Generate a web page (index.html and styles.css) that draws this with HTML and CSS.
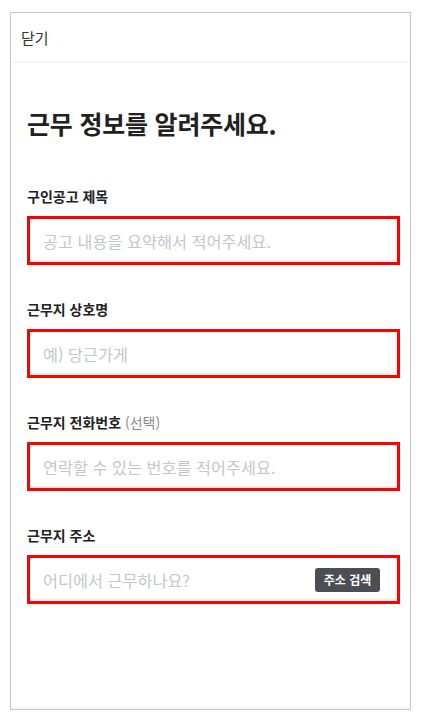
FILE: index.html
```html
<!DOCTYPE html>
<html lang="ko">
<head>
  <meta charset="UTF-8" />
  <meta name="viewport" content="width=device-width, initial-scale=1.0" />
  <title>근무 정보</title>
  <link rel="stylesheet" href="styles.css">
</head>
<body>
  <div class="sheet">
    <header class="sheet-header">
      <button type="button" class="close-btn">닫기</button>
    </header>

    <form class="job-form">
      <h1>근무 정보를 알려주세요.</h1>

      <div class="field">
        <label for="title">구인공고 제목</label>
        <div class="input-box">
          <input type="text" id="title" placeholder="공고 내용을 요약해서 적어주세요.">
        </div>
      </div>

      <div class="field">
        <label for="shop">근무지 상호명</label>
        <div class="input-box">
          <input type="text" id="shop" placeholder="예) 당근가게">
        </div>
      </div>

      <div class="field">
        <label for="phone">근무지 전화번호 <span class="optional">(선택)</span></label>
        <div class="input-box">
          <input type="tel" id="phone" placeholder="연락할 수 있는 번호를 적어주세요.">
        </div>
      </div>

      <div class="field">
        <label for="address">근무지 주소</label>
        <div class="input-box">
          <input type="text" id="address" placeholder="어디에서 근무하나요?">
          <button type="button" class="search-btn">주소 검색</button>
        </div>
      </div>
    </form>
  </div>
</body>
</html>
```

FILE: styles.css
```css
/* Job info sheet */
body {
  font-family: "Noto Sans CJK KR", "Noto Sans", sans-serif;
  background: #fff;
  color: #222;
  margin: 0;
  padding: 12px 20px 15px 10px;
}
.sheet {
  height: 696px;
  border: 1px solid #c6c6c6;
  box-shadow: inset 0 -4px 4px -3px rgba(0, 0, 0, 0.06);
  background: #fff;
  display: flex;
  flex-direction: column;
}
.sheet-header {
  height: 49px;
  border-bottom: 1px solid #eeeeee;
  display: flex;
  align-items: center;
  padding-left: 10px;
}
.close-btn {
  background: none;
  border: none;
  padding: 0;
  font-family: inherit;
  font-size: 15px;
  color: #333;
  cursor: pointer;
}
.job-form {
  display: flex;
  flex-direction: column;
  gap: 34px;
  padding: 44px 10px 0 16px;
}
h1 {
  font-size: 25px;
  line-height: 32px;
  font-weight: bold;
  color: #212121;
  margin: 0 0 13px;
  letter-spacing: -0.2px;
}
.field { display: flex; flex-direction: column; gap: 10px; }
label {
  font-size: 14px;
  line-height: 20px;
  font-weight: bold;
  color: #222;
}
.optional { font-weight: normal; color: #8a8a8a; }
.input-box {
  height: 43px;
  border: 3px solid #ff0000;
  display: flex;
  align-items: center;
  padding: 0 17px 0 13px;
  box-shadow: inset -2px -2px 2px rgba(0, 0, 0, 0.08);
}
.input-box input {
  flex: 1;
  min-width: 0;
  border: none;
  outline: none;
  padding: 0;
  font-family: inherit;
  font-size: 16.3px;
  color: #222;
  background: transparent;
}
.input-box input::placeholder { color: #c3c6cb; }
.search-btn {
  background: #4b4f55;
  color: #fff;
  border: none;
  border-radius: 3px;
  font-family: inherit;
  font-size: 12px;
  font-weight: bold;
  height: 24px;
  width: 65px;
  padding: 0;
}
```
